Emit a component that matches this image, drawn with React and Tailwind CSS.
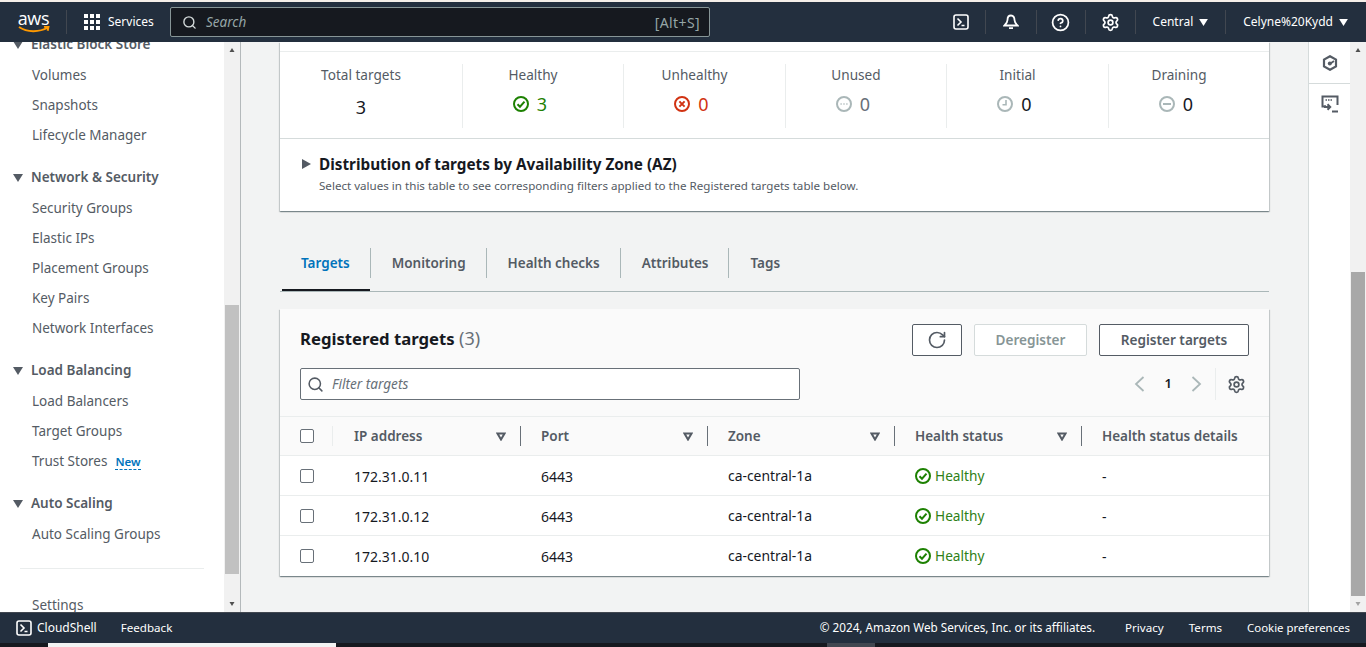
import { Search, RotateCw, Settings, CircleHelp } from 'lucide-react';

const font = "font-['Noto_Sans',sans-serif]";

const navGroups = [
  { title: 'Elastic Block Store', items: ['Volumes', 'Snapshots', 'Lifecycle Manager'] },
  { title: 'Network & Security', items: ['Security Groups', 'Elastic IPs', 'Placement Groups', 'Key Pairs', 'Network Interfaces'] },
  { title: 'Load Balancing', items: ['Load Balancers', 'Target Groups', 'Trust Stores'] },
  { title: 'Auto Scaling', items: ['Auto Scaling Groups'] },
];

const rows = ['172.31.0.11', '172.31.0.12', '172.31.0.10'];
const tabs = ['Targets', 'Monitoring', 'Health checks', 'Attributes', 'Tags'];

function Terminal({ className }) {
  return (
    <svg viewBox="0 0 16 16" fill="none" stroke="currentColor" strokeWidth="1.6" className={className}>
      <rect x="1" y="1" width="14" height="14" rx="2" />
      <path d="M4.500 4.500 8 8l-3.500 3.500M8.500 11.500h3" />
    </svg>
  );
}

function Caret({ className }) {
  return (
    <svg viewBox="0 0 10 8" className={className} fill="currentColor">
      <path d="M0 0h10L5 8z" />
    </svg>
  );
}

function SortCaret() {
  return (
    <svg viewBox="0 0 10 9" fill="none" stroke="#545b64" strokeWidth="2" className="w-[10px] h-[9px]">
      <path d="M1.500 1.500h7L5 7.500z" />
    </svg>
  );
}

function StatusIcon({ kind, className = 'w-4 h-4' }) {
  const color = {
    ok: '#1d8102',
    bad: '#d13212',
    unused: '#aab7b8',
    initial: '#aab7b8',
    drain: '#aab7b8',
  }[kind];
  return (
    <svg viewBox="0 0 16 16" fill="none" stroke={color} strokeWidth="2" className={className}>
      <circle cx="8" cy="8" r="7" />
      {kind === 'ok' && <path d="M4.500 8.200 7 10.700l4.500-5" />}
      {kind === 'bad' && <path d="m5.400 5.400 5.200 5.200m0-5.200-5.200 5.200" />}
      {kind === 'unused' && <path d="M4.500 8h1.200m1.700 0h1.200m1.700 0h1.200" strokeWidth="1.600" />}
      {kind === 'initial' && <path d="M9 4v4.800H5.500" strokeWidth="1.600" />}
      {kind === 'drain' && <path d="M4 8h8" />}
    </svg>
  );
}

function Stat({ label, value, kind, valueClass, width, last }) {
  return (
    <div className={`${width} shrink-0 pr-[20px] flex flex-col items-center h-[64px] ${last ? '' : 'border-r border-[#eaeded]'}`}>
      <div className="text-[13.6px] leading-[20px] text-[#545b64] mt-[1px]">{label}</div>
      {kind ? (
        <div className="flex items-center gap-[8px] mt-[9px] pr-[6px] leading-[20px]">
          <StatusIcon kind={kind} />
          <span className={`text-[18px] ${valueClass}`}>{value}</span>
        </div>
      ) : (
        <div className="text-[18px] leading-[24px] mt-[10px] text-[#16191f]">{value}</div>
      )}
    </div>
  );
}

function Checkbox() {
  return <div className="w-[14px] h-[14px] border border-[#687078] rounded-[2px] bg-white" />;
}

function HeadCell({ label, width, sort }) {
  return (
    <div className={`${width} flex items-center pl-[20px] pr-[12px] h-[20px] shrink-0`}>
      <span className="text-[13.5px] font-semibold text-[#545b64] flex-1 whitespace-nowrap">{label}</span>
      {sort && <SortCaret />}
      {sort && <div className="w-px h-[20px] bg-[#687078] ml-[14px] -mr-[12px]" />}
    </div>
  );
}

function Chevron({ flip }) {
  return (
    <svg viewBox="0 0 11 16" fill="none" stroke="#aab7b8" strokeWidth="1.800" className={`w-[11px] h-[16px] ${flip ? 'rotate-180' : ''}`}>
      <path d="M9.500 1 2 8l7.500 7" />
    </svg>
  );
}

const cardShadow = 'shadow-[0_1px_1px_0_rgba(0,28,36,0.3),1px_1px_1px_0_rgba(0,28,36,0.15),-1px_1px_1px_0_rgba(0,28,36,0.15)]';

export default function App() {
  return (
    <div className={`${font} w-[1366px] h-[647px] overflow-hidden flex flex-col bg-white`}>
      <div className="h-[2px] bg-[#f5efe9] shrink-0" />

      {/* top nav */}
      <header className="h-[40px] shrink-0 bg-[#232f3e] text-white flex items-center text-[12px]">
        <div className="w-[66px] h-[40px] flex flex-col items-center shrink-0 pl-[1px]">
          <span className="font-['Open_Sans',sans-serif] text-[18px] leading-[18px] mt-[7px] tracking-[-0.3px]">aws</span>
          <svg viewBox="0 0 32 8" className="w-[32px] h-[8px] -mt-[1px]" fill="none" stroke="#ff9900" strokeWidth="2">
            <path d="M1 1c8 5.500 20 5.500 29 .5M26 .8l4.500-.3-.8 4.300" />
          </svg>
        </div>
        <div className="w-px h-[24px] bg-[#414750]" />
        <div className="grid grid-cols-3 gap-[2px] ml-[17px] shrink-0">
          {Array.from({ length: 9 }).map((_, i) => (
            <div key={i} className="w-[4px] h-[4px] bg-white" />
          ))}
        </div>
        <span className="ml-[8px] w-[45px]">Services</span>
        <div className="ml-[17px] w-[540px] h-[30px] bg-[#16191f] border border-[#879596] rounded-[2px] flex items-center pl-[11px] pr-[9px] shrink-0">
          <Search className="w-[15px] h-[15px] text-[#d5dbdb]" strokeWidth={2.2} />
          <span className="ml-[9px] italic text-[#95a5a6] text-[13.5px] flex-1">Search</span>
          <span className="text-[#95a5a6] text-[14px] tracking-[0.4px]">[Alt+S]</span>
        </div>
        <div className="flex-1" />
        <div className="flex items-center pr-[18px]">
          <Terminal className="w-[16px] h-[16px] mr-[16px]" />
          <div className="w-px h-[24px] bg-[#414750]" />
          <svg viewBox="0 0 16 16" fill="none" stroke="white" strokeWidth="1.800" className="w-[16px] h-[16px] mx-[17px]">
            <path d="M8 1.500c-2.500 0-3.500 2-3.500 4.500 0 2-1 3.500-3 5.500h13c-2-2-3-3.500-3-5.500 0-2.500-1-4.500-3.500-4.500zM6 14.200h4" />
          </svg>
          <div className="w-px h-[24px] bg-[#414750]" />
          <CircleHelp className="w-[19px] h-[19px] mx-[14.5px]" strokeWidth={2.2} />
          <div className="w-px h-[24px] bg-[#414750]" />
          <Settings className="w-[19px] h-[19px] mx-[15px]" strokeWidth={2.2} />
          <div className="w-px h-[24px] bg-[#414750]" />
          <div className="flex items-center gap-[6px] ml-[17px] mr-[17px]">
            Central <Caret className="w-[9px] h-[7px]" />
          </div>
          <div className="w-px h-[24px] bg-[#414750]" />
          <div className="flex items-center gap-[6px] ml-[17px]">
            Celyne%20Kydd <Caret className="w-[9px] h-[7px]" />
          </div>
        </div>
      </header>

      <div className="flex-1 flex min-h-0">
        {/* side navigation */}
        <aside className="w-[241px] shrink-0 flex border-r border-[#b4b9bb] bg-white">
          <div className="w-[224px] overflow-hidden">
            <div className="-mt-[13px] text-[13.5px] text-[#545b64]">
              {navGroups.map((g) => (
                <div key={g.title} className="mb-[12px]">
                  <div className="flex items-center h-[31px] pl-[13px]">
                    <Caret className="w-[10px] h-[8px] text-[#545b64]" />
                    <span className="ml-[8px] font-semibold">{g.title}</span>
                  </div>
                  {g.items.map((item) => (
                    <div key={item} className="h-[30px] flex items-center pl-[32px]">
                      {item}
                      {item === 'Trust Stores' && (
                        <span className="ml-[8px] mt-[2px] text-[11.5px] leading-[15px] font-semibold text-[#0073bb] border-b border-dashed border-[#0073bb]">New</span>
                      )}
                    </div>
                  ))}
                </div>
              ))}
              <div className="mx-[20px] border-t border-[#eaeded] mt-[19px]" />
              <div className="h-[30px] flex items-center pl-[32px] mt-[21px]">Settings</div>
            </div>
          </div>
          <div className="w-[16px] bg-[#f1f1f1] flex flex-col items-center">
            <div className="h-[16px] flex items-center justify-center"><Caret className="w-[8px] h-[4px] rotate-180 text-[#505050]" /></div>
            <div className="flex-1 pt-[247px] w-full flex flex-col px-[1px]">
              <div className="h-[269px] bg-[#c1c1c1] w-full" />
            </div>
            <div className="h-[16px] flex items-center justify-center"><Caret className="w-[8px] h-[4px] text-[#505050]" /></div>
          </div>
        </aside>

        {/* main content */}
        <main className="flex-1 bg-[#f2f3f3] overflow-hidden px-[39px] min-w-0">
          <section className={`bg-white h-[169px] ${cardShadow}`}>
            <div className="h-[10px] border-b border-[#eaeded]" />
            <div className="flex items-start pt-[12px] h-[87px] border-b border-[#d5dbdb]">
              <Stat label="Total targets" value="3" width="w-[183px]" />
              <Stat label="Healthy" value="3" kind="ok" valueClass="text-[#1d8102]" width="w-[161px]" />
              <Stat label="Unhealthy" value="0" kind="bad" valueClass="text-[#d13212]" width="w-[162px]" />
              <Stat label="Unused" value="0" kind="unused" valueClass="text-[#687078]" width="w-[161px]" />
              <Stat label="Initial" value="0" kind="initial" valueClass="text-[#16191f]" width="w-[162px]" />
              <Stat label="Draining" value="0" kind="drain" valueClass="text-[#16191f]" width="w-[160px]" last />
            </div>
            <div className="pl-[22px] pt-[14px] flex">
              <svg viewBox="0 0 9 10" fill="#545b64" className="w-[9px] h-[10px] mt-[6px]">
                <path d="M0 0l9 5-9 5z" />
              </svg>
              <div className="ml-[8px]">
                <div className="text-[15.3px] leading-[22px] font-bold text-[#16191f]">Distribution of targets by Availability Zone (AZ)</div>
                <div className="text-[11.6px] leading-[20px] mt-[1px] text-[#545b64]">Select values in this table to see corresponding filters applied to the Registered targets table below.</div>
              </div>
            </div>
          </section>

          {/* tabs */}
          <nav className="mt-[30px] h-[51px] flex items-start border-b border-[#aab7b8] pt-[7px] pl-[2px]">
            {tabs.map((t, i) => (
              <div key={t} className={`relative h-[30px] flex items-center text-[13.5px] font-semibold ${i === 0 ? 'text-[#0073bb] pl-[19px] pr-[20px]' : 'text-[#545b64] pl-[21px] pr-[20px]'} ${i < tabs.length - 1 ? 'border-r border-[#aab7b8]' : ''}`}>
                {t}
                {i === 0 && <div className="absolute left-0 right-0 top-[41px] h-[2px] bg-[#16191f]" />}
              </div>
            ))}
          </nav>

          {/* registered targets table */}
          <section className={`mt-[17px] bg-white ${cardShadow}`}>
            <div className="bg-[#fafafa] h-[108px] px-[20px] border-b border-[#eaeded]">
              <div className="flex items-start pt-[15px]">
                <h2 className="-mt-[1px] text-[16.7px] leading-[30px] font-bold text-[#16191f]">
                  Registered targets <span className="font-normal text-[18px] text-[#687078]">(3)</span>
                </h2>
                <div className="flex-1" />
                <button className="w-[50px] h-[32px] border border-[#545b64] rounded-[2px] bg-white flex items-center justify-center">
                  <RotateCw className="w-[20px] h-[20px] text-[#545b64]" strokeWidth={2} />
                </button>
                <button className="ml-[12px] w-[113px] h-[32px] border border-[#d5dbdb] rounded-[2px] bg-white text-[13.6px] font-semibold text-[#879596]">Deregister</button>
                <button className="ml-[12px] w-[150px] h-[32px] border border-[#545b64] rounded-[2px] bg-white text-[13.6px] font-semibold text-[#545b64]">Register targets</button>
              </div>
              <div className="flex items-center mt-[12px]">
                <div className="w-[500px] h-[32px] border border-[#687078] rounded-[2px] bg-white flex items-center pl-[6px]">
                  <Search className="w-[17px] h-[17px] text-[#545b64]" strokeWidth={2.2} />
                  <span className="ml-[8px] italic text-[13.6px] text-[#687078]">Filter targets</span>
                </div>
                <div className="flex-1" />
                <Chevron />
                <span className="ml-[20px] mr-[19px] text-[13px] font-semibold text-[#16191f]">1</span>
                <Chevron flip />
                <div className="w-px h-[32px] bg-[#eaeded] ml-[13px]" />
                <Settings className="w-[19px] h-[19px] ml-[11px] text-[#545b64]" strokeWidth={2.2} />
                <div className="w-[3px]" />
              </div>
            </div>
            <div className="bg-[#fafafa] h-[39px] border-b border-[#eaeded] flex items-center">
              <div className="w-[54px] pl-[20px] shrink-0 flex items-center">
                <Checkbox />
                <div className="w-px h-[20px] bg-[#eaeded] ml-[18px]" />
              </div>
              <HeadCell label="IP address" width="w-[187px]" sort />
              <HeadCell label="Port" width="w-[187px]" sort />
              <HeadCell label="Zone" width="w-[187px]" sort />
              <HeadCell label="Health status" width="w-[187px]" sort />
              <HeadCell label="Health status details" width="w-[187px]" />
            </div>
            {rows.map((ip, i) => (
              <div key={ip} className={`h-[40px] flex items-center text-[14px] text-[#16191f] border-b ${i < rows.length - 1 ? 'border-[#eaeded]' : 'border-transparent'}`}>
                <div className="w-[54px] pl-[20px] shrink-0"><Checkbox /></div>
                <div className="w-[187px] pl-[20px] shrink-0 mt-[1px]">{ip}</div>
                <div className="w-[187px] pl-[20px] shrink-0 mt-[1px]">6443</div>
                <div className="w-[187px] pl-[20px] shrink-0 mt-[1px] text-[13.9px]">ca-central-1a</div>
                <div className="w-[187px] pl-[20px] shrink-0 mt-[1px] flex items-center gap-[4px] text-[#2f7f17] text-[13.7px]">
                  <StatusIcon kind="ok" /> Healthy
                </div>
                <div className="w-[187px] pl-[20px] shrink-0 mt-[1px]">-</div>
              </div>
            ))}
          </section>
        </main>

        {/* right rail */}
        <div className="w-[42px] shrink-0 bg-white border-l border-[#d5dbdb] flex flex-col items-stretch">
          <div className="h-[42px] flex items-center justify-center border-b border-[#d5dbdb]">
            <svg viewBox="0 0 16 16" fill="none" stroke="#545b64" strokeWidth="2.200" className="w-[16px] h-[16px]">
              <path d="M8 1.200 14 4.600v6.800l-6 3.400-6-3.400V4.600z" />
              <path d="M8.500 8.500 12 6" strokeWidth="1.800" />
              <circle cx="7.800" cy="8.500" r="2" fill="#545b64" stroke="none" />
            </svg>
          </div>
          <div className="h-[40px] flex items-center justify-center">
            <svg viewBox="0 0 18 18" fill="none" stroke="#545b64" strokeWidth="2" className="w-[18px] h-[18px]">
              <path d="M5 11.500H1.500V1.500h15V10" />
              <path d="M4.500 5h1.500m1 0h1.500m1 0h1.500" strokeWidth="1.500" />
              <path d="M4 10.500v1.500h5M6.500 9.300 9.200 12l-2.700 2.700M11 16.500h6" />
            </svg>
          </div>
        </div>
        <div className="w-[16px] shrink-0 bg-[#f1f1f1] flex flex-col">
          <div className="h-[16px] flex items-center justify-center"><Caret className="w-[8px] h-[4px] rotate-180 text-[#505050]" /></div>
          <div className="flex-1 pt-[214px] flex flex-col px-[1px]">
            <div className="h-[324px] bg-[#a8a8a8]" />
          </div>
          <div className="h-[16px] flex items-center justify-center"><Caret className="w-[8px] h-[4px] text-[#a3a3a3]" /></div>
        </div>
      </div>

      {/* footer */}
      <footer className="h-[31px] shrink-0 bg-[#232f3e] text-white text-[11.6px] flex items-center pl-[16px] pr-[16px] border-t border-[#414750]">
        <Terminal className="w-[16px] h-[16px]" />
        <span className="ml-[5px] text-[12px]">CloudShell</span>
        <span className="ml-[24px]">Feedback</span>
        <div className="flex-1" />
        <span className="text-[11.7px]">© 2024, Amazon Web Services, Inc. or its affiliates.</span>
        <span className="ml-[30px]">Privacy</span>
        <span className="ml-[25px]">Terms</span>
        <span className="ml-[25px] text-[11.4px]">Cookie preferences</span>
      </footer>
      <div className="h-[4px] shrink-0 bg-[#16191f] flex">
        <div className="ml-[48px] w-[288px] bg-[#f2f3f3]" />
        <div className="ml-[491px] w-[48px] bg-[#414750]" />
      </div>
    </div>
  );
}
